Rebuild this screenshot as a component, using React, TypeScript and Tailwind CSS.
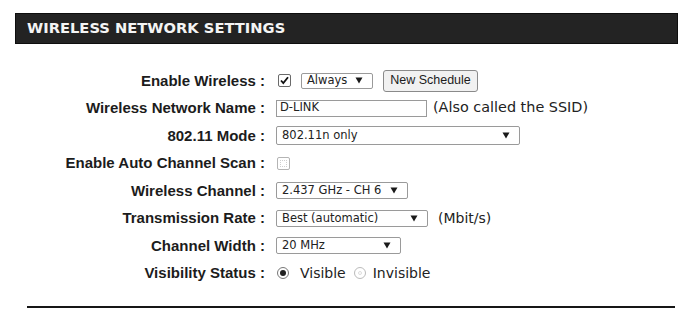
const label = "font-['Liberation_Sans',Arial,sans-serif] font-bold text-[15px] text-[#1c1c1c] text-right whitespace-nowrap";
const ctl = "font-['DejaVu_Sans',Verdana,sans-serif] text-[11.5px] text-[#222]";
const note = "font-['DejaVu_Sans',Verdana,sans-serif] text-[14px] text-[#222]";

function Arrow() {
  return (
    <svg width="8" height="7" viewBox="0 0 8 7" className="shrink-0">
      <path d="M0.5 0.5h7L4 6.5z" fill="#1a1a1a" />
    </svg>
  );
}

function Select({ value, width, height = "h-[17px]" }: { value: string; width: string; height?: string }) {
  return (
    <div className={`${width} ${height} ${ctl} flex items-center justify-between border border-[#9a9a9a] rounded-[2px] bg-white pl-[5px] pr-[9px]`}>
      <span className="leading-none">{value}</span>
      <Arrow />
    </div>
  );
}

function Checkbox({ checked }: { checked?: boolean }) {
  return (
    <div
      className={`w-[13px] h-[13px] rounded-[2px] border flex items-center justify-center bg-white ${
        checked ? "border-[#6a6a6a]" : "border-[#b4b4b4]"
      }`}
    >
      {checked ? (
        <svg width="9" height="9" viewBox="0 0 9 9">
          <path d="M1 4.5l2.3 2.5L8 1.2" stroke="#111" strokeWidth="1.8" fill="none" />
        </svg>
      ) : (
        <div className="w-[7px] h-[7px] border border-dotted border-[#d0d0d0]" />
      )}
    </div>
  );
}

function Radio({ checked }: { checked?: boolean }) {
  return (
    <div
      className={`w-[12px] h-[12px] rounded-full border flex items-center justify-center bg-white ${
        checked ? "border-[#777]" : "border-[#bbb]"
      }`}
    >
      {checked ? <div className="w-[6px] h-[6px] rounded-full bg-[#222]" /> : <div className="w-[4px] h-[4px] rounded-full border border-[#ddd]" />}
    </div>
  );
}

function Row({ name, children }: { name: string; children: React.ReactNode }) {
  return (
    <div className="h-[27.5px] grid grid-cols-[265px_1fr] gap-[11px] items-center">
      <div className={label}>{name} :</div>
      <div className="flex items-center">{children}</div>
    </div>
  );
}

export default function App() {
  return (
    <div className="w-[690px] h-[320px] bg-white relative overflow-hidden">
      <div className="pt-[13px] px-[15px] pr-[12px]">
        <div className="h-[31px] bg-[#232323] border border-[#0e0e0e] flex items-center pl-[11px]">
          <span className="font-['DejaVu_Sans',Verdana,sans-serif] font-bold text-[14.7px] text-[#f4f4f4]">
            WIRELESS NETWORK SETTINGS
          </span>
        </div>
      </div>

      <div className="mt-[23px]">
        <Row name="Enable Wireless">
          <div className="ml-[2px]">
            <Checkbox checked />
          </div>
          <div className="ml-[10px]">
            <Select value="Always" width="w-[72px]" height="h-[16px]" />
          </div>
          <div className="ml-[10px] w-[95px] h-[22px] flex items-center justify-center rounded-[3px] border border-[#8a8a8a] bg-[#f1f1f1] font-['Liberation_Sans',Arial,sans-serif] text-[12.5px] text-[#1c1c1c]">
            New Schedule
          </div>
        </Row>
        <Row name="Wireless Network Name">
          <div className={`w-[151px] h-[17px] border border-[#9a9a9a] bg-white pl-[3px] flex items-center ${ctl}`}>
            <span className="leading-none">D-LINK</span>
          </div>
          <span className={`ml-[6px] font-['DejaVu_Sans',Verdana,sans-serif] text-[14.4px] text-[#222]`}>(Also called the SSID)</span>
        </Row>
        <Row name="802.11 Mode">
          <Select value="802.11n only" width="w-[244px]" height="h-[19px]" />
        </Row>
        <Row name="Enable Auto Channel Scan">
          <div className="ml-[1px]">
            <Checkbox />
          </div>
        </Row>
        <Row name="Wireless Channel">
          <Select value="2.437 GHz - CH 6" width="w-[132px]" />
        </Row>
        <Row name="Transmission Rate">
          <Select value="Best (automatic)" width="w-[152px]" />
          <span className={`ml-[10px] ${note}`}>(Mbit/s)</span>
        </Row>
        <Row name="Channel Width">
          <Select value="20 MHz" width="w-[125px]" />
        </Row>
        <Row name="Visibility Status">
          <div className="ml-[1px]">
            <Radio checked />
          </div>
          <span className={`ml-[11px] ${note}`}>Visible</span>
          <div className="ml-[8px]">
            <Radio />
          </div>
          <span className={`ml-[7px] ${note}`}>Invisible</span>
        </Row>
      </div>

      <div className="mt-[19px] mx-[27px] mr-[15px] h-[2px] bg-[#161616]" />
    </div>
  );
}
